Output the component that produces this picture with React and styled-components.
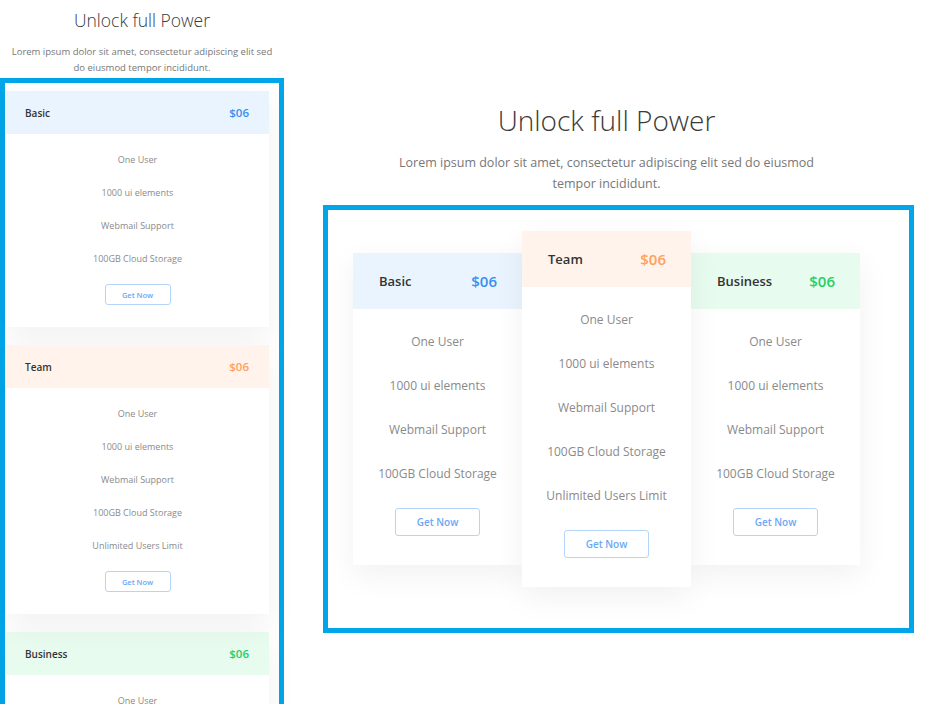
import React from "react";
import styled, { createGlobalStyle } from "styled-components";

const GlobalStyle = createGlobalStyle`
  body {
    margin: 0;
    background: #fff;
    font-family: "Open Sans", "Noto Sans", sans-serif;
  }
`;

const plans = [
  {
    name: "Basic",
    price: "$06",
    tint: "#eaf4fe",
    color: "#3a8ff0",
    features: ["One User", "1000 ui elements", "Webmail Support", "100GB Cloud Storage"],
  },
  {
    name: "Team",
    price: "$06",
    tint: "#fff3ec",
    color: "#ffa15c",
    featured: true,
    features: [
      "One User",
      "1000 ui elements",
      "Webmail Support",
      "100GB Cloud Storage",
      "Unlimited Users Limit",
    ],
  },
  {
    name: "Business",
    price: "$06",
    tint: "#e8fbef",
    color: "#26cf66",
    features: ["One User", "1000 ui elements", "Webmail Support", "100GB Cloud Storage"],
  },
];

const Page = styled.div`
  display: flex;
  width: 929px;
  height: 704px;
  overflow: hidden;
`;

const MobileView = styled.div`
  width: 284px;
  flex-shrink: 0;
`;

const DesktopView = styled.div`
  flex: 1;
  display: flex;
  flex-direction: column;
`;

const Title = styled.h2`
  margin: ${(p) => (p.$small ? "8px 0 0" : "104px 0 0")};
  text-align: center;
  font-weight: 300;
  color: #3a3a3a;
  font-size: ${(p) => (p.$small ? "17.5px" : "28px")};
  line-height: ${(p) => (p.$small ? "24px" : "32px")};
`;

const Subtitle = styled.p`
  margin: ${(p) => (p.$small ? "12px auto 0" : "16px auto 0")};
  text-align: center;
  color: #777;
  font-size: ${(p) => (p.$small ? "9.5px" : "12.5px")};
  line-height: ${(p) => (p.$small ? "16px" : "21px")};
  max-width: ${(p) => (p.$small ? "270px" : "440px")};
`;

const Highlight = styled.div`
  border: 5px solid #00a6e9;
  box-sizing: border-box;
`;

const MobileBox = styled(Highlight)`
  margin-top: 2px;
  height: 700px;
  padding: 8px 10px 0 1px;
  display: flex;
  flex-direction: column;
  gap: 18px;
`;

const DesktopBox = styled(Highlight)`
  margin: 11px 0 0 39px;
  width: 591px;
  height: 428px;
  padding: 21px 25px 0;
  display: flex;
  align-items: flex-start;
`;

const Card = styled.div`
  background: #fff;
  box-shadow: 0 10px 30px rgba(0, 0, 0, 0.06);
  flex-shrink: 0;
  width: ${(p) => (p.$small ? "auto" : "169px")};
  margin-top: ${(p) => (p.$small || p.$featured ? "0" : "22px")};
  position: relative;
  z-index: ${(p) => (p.$featured ? 1 : 0)};
  padding-bottom: ${(p) => (p.$small ? "22px" : "29px")};
  text-align: center;
`;

const CardHead = styled.div`
  display: flex;
  align-items: center;
  justify-content: space-between;
  background: ${(p) => p.$tint};
  height: ${(p) => (p.$small ? "43px" : "56px")};
  padding: ${(p) => (p.$small ? "0 20px 0 19px" : "0 25px 0 26px")};
`;

const PlanName = styled.span`
  color: #333;
  font-weight: 600;
  font-size: ${(p) => (p.$small ? "10px" : "13px")};
`;

const Price = styled.span`
  color: ${(p) => p.$color};
  font-weight: 600;
  font-size: ${(p) => (p.$small ? "11.5px" : "15px")};
`;

const FeatureList = styled.ul`
  list-style: none;
  margin: 0;
  padding: ${(p) => (p.$small ? "9px 0 0" : "11px 0 0")};
`;

const Feature = styled.li`
  color: #8a8a8a;
  font-size: ${(p) => (p.$small ? "9px" : "12px")};
  line-height: ${(p) => (p.$small ? "33px" : "44px")};
`;

const Button = styled.button`
  display: block;
  margin: ${(p) => (p.$small ? "9px auto 0" : "12px auto 0")};
  width: ${(p) => (p.$small ? "66px" : "85px")};
  height: ${(p) => (p.$small ? "21px" : "28px")};
  padding: 0;
  background: #fff;
  border: 1px solid #b4d5fa;
  border-radius: 3px;
  color: #6aa8f6;
  font-family: inherit;
  font-weight: 600;
  font-size: ${(p) => (p.$small ? "7.5px" : "10px")};
  cursor: pointer;
`;

const PlanCard = ({ plan, small }) => (
  <Card $small={small} $featured={plan.featured}>
    <CardHead $small={small} $tint={plan.tint}>
      <PlanName $small={small}>{plan.name}</PlanName>
      <Price $small={small} $color={plan.color}>
        {plan.price}
      </Price>
    </CardHead>
    <FeatureList $small={small}>
      {plan.features.map((f) => (
        <Feature key={f} $small={small}>
          {f}
        </Feature>
      ))}
    </FeatureList>
    <Button $small={small}>Get Now</Button>
  </Card>
);

const lorem =
  "Lorem ipsum dolor sit amet, consectetur adipiscing elit sed do eiusmod tempor incididunt.";

const App = () => (
  <Page>
    <GlobalStyle />
    <MobileView>
      <Title $small>Unlock full Power</Title>
      <Subtitle $small>{lorem}</Subtitle>
      <MobileBox>
        {plans.map((p) => (
          <PlanCard key={p.name} plan={p} small />
        ))}
      </MobileBox>
    </MobileView>
    <DesktopView>
      <Title>Unlock full Power</Title>
      <Subtitle>{lorem}</Subtitle>
      <DesktopBox>
        {plans.map((p) => (
          <PlanCard key={p.name} plan={p} />
        ))}
      </DesktopBox>
    </DesktopView>
  </Page>
);

export default App;
